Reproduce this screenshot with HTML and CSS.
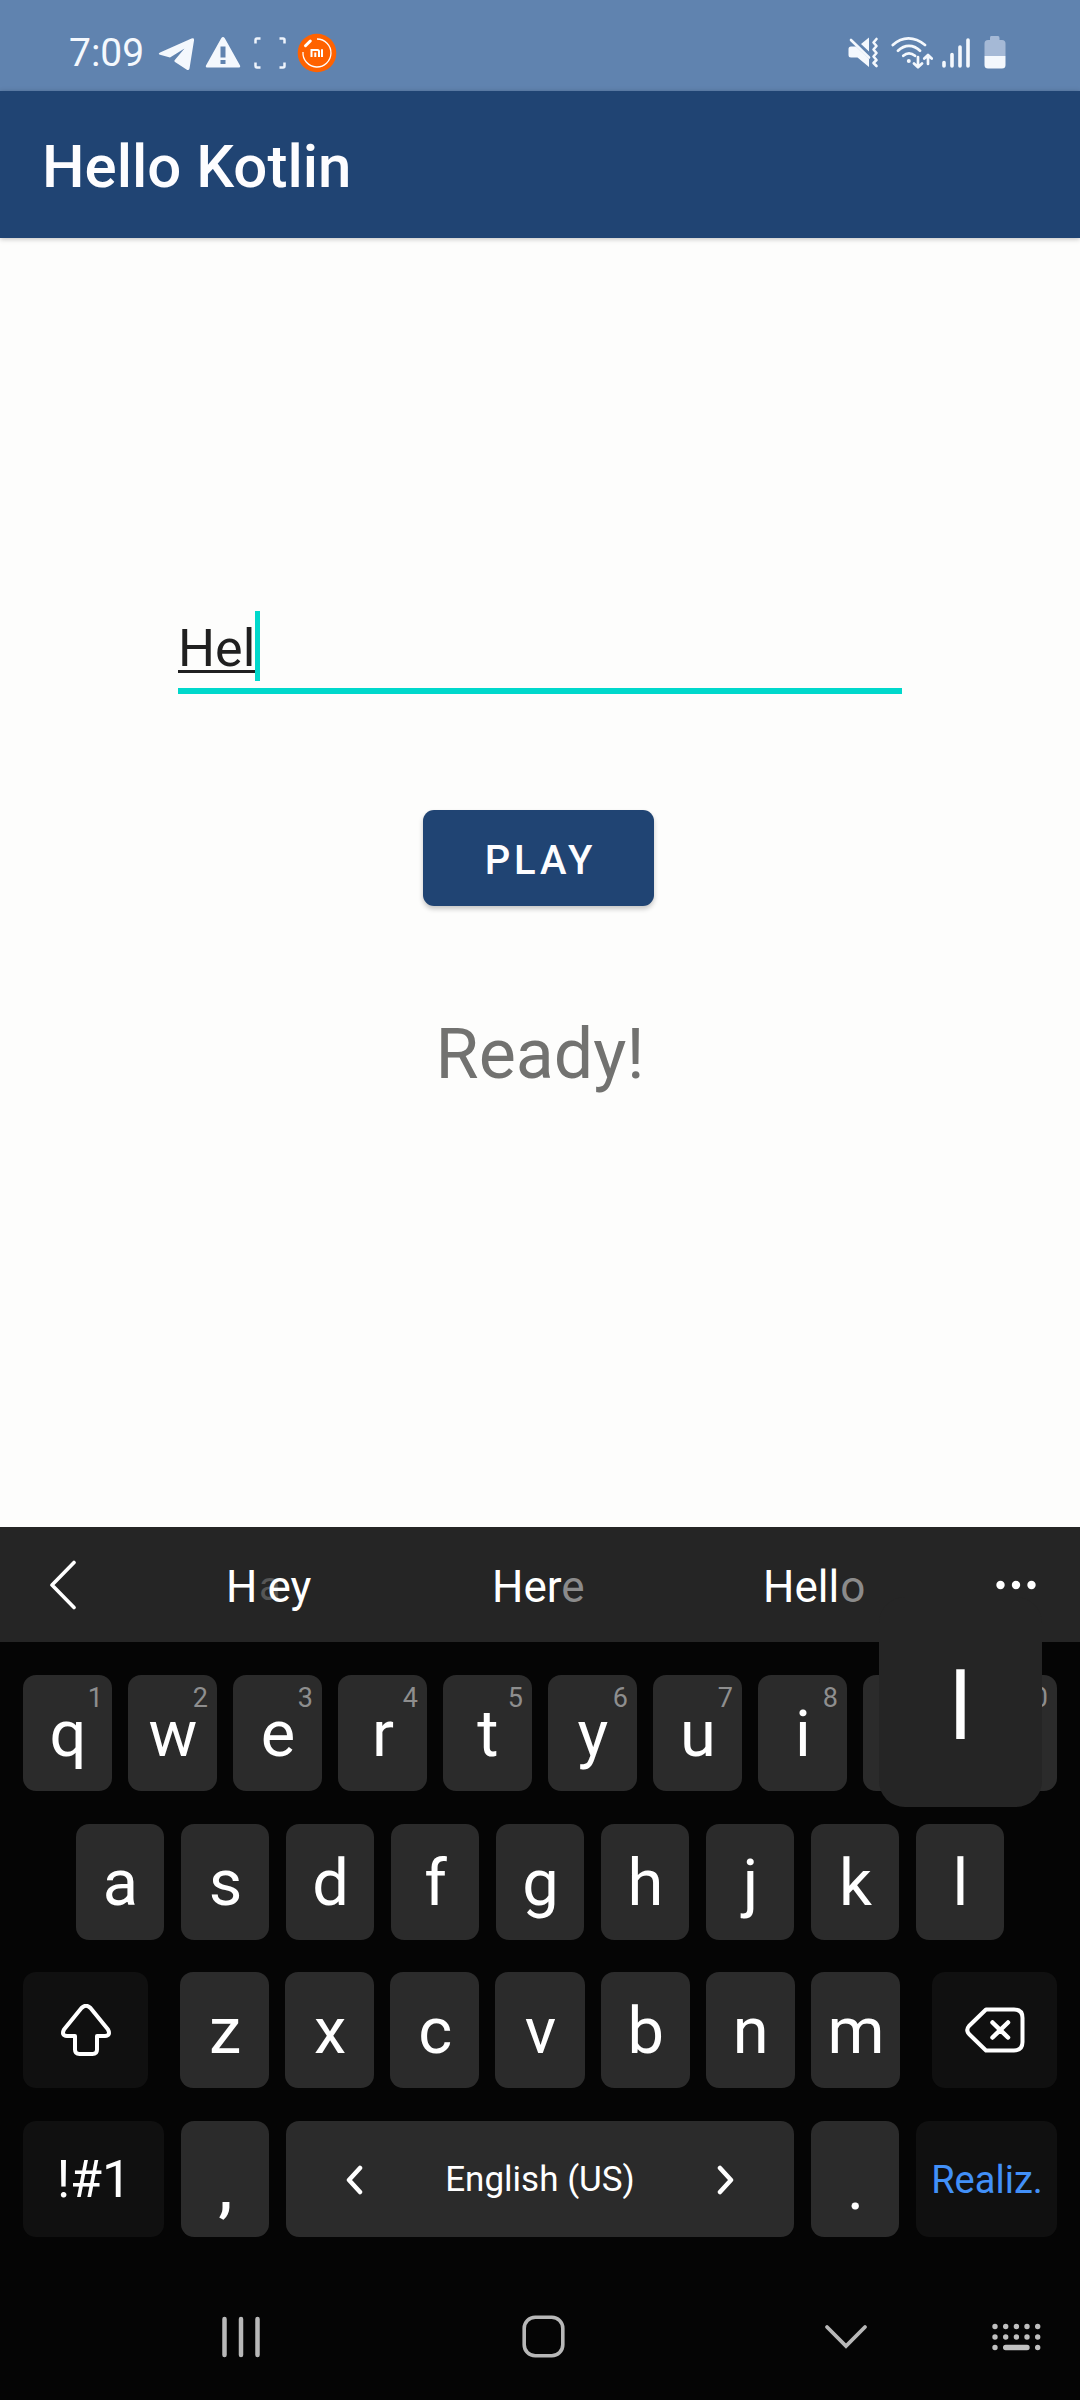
FILE: index.html
```html
<!DOCTYPE html>
<html lang="en">
<head>
<meta charset="utf-8">
<title>Hello Kotlin</title>
<link rel="stylesheet" href="styles.css">
</head>
<body>
<div class="phone">
  <div class="status">
    <span class="time">7:09</span>
    <svg class="i-telegram" width="37" height="33" viewBox="0 0 37 33"><path d="M2 14.500 33.500.500Q36.500-.5 36 2.500L31.500 30.500Q30.800 33 28.500 31.500L17 24Q15.800 23 17 21.800L26.500 10.500 12 19.500 2 16.800Q-.5 15.800 2 14.500Z" fill="#f4f8fd"/></svg>
    <svg class="i-warning" width="36" height="31" viewBox="0 0 36 31"><path fill-rule="evenodd" d="M16.200 1.300Q18-1.200 19.800 1.300L35 28.500Q35.700 30.500 34 30.500H2Q.3 30.500 1 28.500ZM15.500 9.500V20.500H20.500V9.500ZM15.500 23V27H20.500V23Z" fill="#f4f8fd"/></svg>
    <svg class="i-capture" width="32" height="32" viewBox="0 0 32 32"><path d="M1.500 6.500V3Q1.500 1.500 3 1.500H6.500M25.500 1.500H29Q30.500 1.500 30.500 3V6.500M30.500 25.500V29Q30.500 30.500 29 30.500H25.500M6.500 30.500H3Q1.500 30.500 1.500 29V25.500" fill="none" stroke="#eef4fc" stroke-width="2.500"/></svg>
    <svg class="i-mi" width="40" height="40" viewBox="0 0 40 40"><circle cx="20" cy="20" r="19.300" fill="#ff6200"/><path d="M20 6A14 14 0 1 1 6 19" fill="none" stroke="#fff" stroke-width="1.300"/><path d="M8.500 12.700 13.300 8" stroke="#fff" stroke-width="3" stroke-linecap="round"/><path d="M14.500 24V17H20.500Q22 17 22 18.500V24M18.300 19.500V24M25 16.200V24" fill="none" stroke="#fff" stroke-width="2"/></svg>
    <span class="spacer"></span>
    <svg class="i-mute" width="31" height="31" viewBox="0 0 31 31"><path d="M.500 12Q.5 9.500 3 9.500H8L21 22V30L9.500 20.500H3Q.5 20.500.5 18ZM13 7 21 .500V14.500Z" fill="#f4f8fd"/><path d="M3 3 21 20.500" stroke="#f4f8fd" stroke-width="2.600" stroke-linecap="round"/><path d="M28.500 2 25.500 5.500 28.500 9 25.500 12.500 28.500 16 25.500 19.500 28.500 23 25.500 26 28.500 29" fill="none" stroke="#f4f8fd" stroke-width="2.600" stroke-linecap="round" stroke-linejoin="round"/></svg>
    <svg class="i-wifi" width="42" height="33" viewBox="0 0 42 33" fill="none" stroke="#f4f8fd" stroke-width="2.700" stroke-linecap="round" stroke-linejoin="round"><path d="M1.800 9Q9 2.300 17.500 2.300T34 9M7 14.800Q12 9.800 18 9.800T29 14.800M12.300 19.800Q15 17.300 18 17.300T24 19.800M27 21V31M23 27.500 27 31.300 31 27.500M37 28V19.500M33.300 22.500 37 19 40.700 22.500"/><circle cx="17.800" cy="25" r="2" fill="#f4f8fd" stroke="none"/></svg>
    <svg class="i-signal" width="28" height="30" viewBox="0 0 28 30"><path d="M2 24.500V28M10 16.500V28M18 9V28M26 2V28" stroke="#f4f8fd" stroke-width="3.600" stroke-linecap="round"/></svg>
    <svg class="i-battery" width="22" height="33" viewBox="0 0 22 33"><path d="M7 0H14Q15.500 0 15.500 2V4H18Q21.500 4 21.500 7.500V20H.5V7.500Q.5 4 4 4H6V2Q6 0 7 0Z" fill="#a5b9d6"/><path d="M.5 20H21.500V29Q21.500 32.500 18 32.500H4Q.5 32.500.5 29Z" fill="#f4f8fd"/></svg>
  </div>

  <header class="appbar"><h1>Hello Kotlin</h1></header>

  <main class="content">
    <div class="field"><span class="typed">Hel</span><span class="caret"></span></div>
    <button class="play">PLAY</button>
    <p class="ready">Ready!</p>
  </main>

  <section class="keyboard">
    <div class="suggest">
      <svg class="back" width="28" height="50" viewBox="0 0 28 50"><path d="M25 2.500 3 25 25 47.500" fill="none" stroke="#fff" stroke-width="3.600" stroke-linecap="round" stroke-linejoin="round"/></svg>
      <div class="words">
        <span class="word first">H<i class="ghost">a</i><span class="shifted">ey</span></span>
        <span class="word second">Her<span class="dim">e</span></span>
        <span class="word third">Hell<span class="dim">o</span></span>
      </div>
      <svg class="more" width="40" height="10" viewBox="0 0 40 10" fill="#fff"><circle cx="4.500" cy="5" r="4.200"/><circle cx="20" cy="5" r="4.200"/><circle cx="35.500" cy="5" r="4.200"/></svg>
    </div>
    <div class="keys">
      <div class="row">
        <div class="key">q<sup>1</sup></div><div class="key">w<sup>2</sup></div><div class="key">e<sup>3</sup></div><div class="key">r<sup>4</sup></div><div class="key">t<sup>5</sup></div><div class="key">y<sup>6</sup></div><div class="key">u<sup>7</sup></div><div class="key">i<sup>8</sup></div><div class="key"></div><div class="key"><sup>0</sup></div>
      </div>
      <div class="row home-row">
        <div class="key">a</div><div class="key">s</div><div class="key">d</div><div class="key">f</div><div class="key">g</div><div class="key">h</div><div class="key">j</div><div class="key">k</div><div class="key">l</div>
      </div>
      <div class="row third-row">
        <div class="key side"><svg width="50" height="52" viewBox="0 0 50 52"><path d="M20.500 4Q25-.5 29.500 4L47 25.500Q50 31.500 44 32H36V45.500Q36 50 31.500 50H18.500Q14 50 14 45.500V32H6Q0 31.500 3 25.500Z" fill="none" stroke="#fff" stroke-width="4" stroke-linejoin="round"/></svg></div>
        <div class="letters"><div class="key">z</div><div class="key">x</div><div class="key">c</div><div class="key">v</div><div class="key">b</div><div class="key">n</div><div class="key">m</div></div>
        <div class="key side"><svg width="60" height="46" viewBox="0 0 60 46" fill="none" stroke="#fff" stroke-width="4" stroke-linecap="round" stroke-linejoin="round"><path d="M21 2.500H49Q57.500 2.500 57.500 11V35Q57.500 43.500 49 43.500H21L4 27Q.5 23 4 19Z"/><path d="M27.500 15.500 43 30.500M43 15.500 27.500 30.500" stroke-width="4.500"/></svg></div>
      </div>
      <div class="row">
        <div class="key wide sym">!#1</div>
        <div class="key punct comma">,</div>
        <div class="key space">
          <svg width="17" height="30" viewBox="0 0 17 30"><path d="M14 3 3 15 14 27" fill="none" stroke="#fff" stroke-width="4.500" stroke-linecap="round" stroke-linejoin="round"/></svg>
          <span>English (US)</span>
          <svg width="17" height="30" viewBox="0 0 17 30"><path d="M3 3 14 15 3 27" fill="none" stroke="#fff" stroke-width="4.500" stroke-linecap="round" stroke-linejoin="round"/></svg>
        </div>
        <div class="key punct">.</div>
        <div class="key wide done">Realiz.</div>
      </div>
    </div>
    <div class="popup">l</div>
  </section>

  <nav class="navbar">
    <svg class="recents" width="39" height="42" viewBox="0 0 39 42"><path d="M2.500 3V39M19 3V39M35.500 3V39" stroke="#b8b8b8" stroke-width="4.500" stroke-linecap="round"/></svg>
    <svg class="home" width="43" height="43" viewBox="0 0 43 43"><rect x="2.200" y="2.200" width="38.600" height="38.600" rx="11" fill="none" stroke="#b8b8b8" stroke-width="3.600"/></svg>
    <svg class="hide" width="44" height="26" viewBox="0 0 44 26"><path d="M3 3 22 22 41 3" fill="none" stroke="#b8b8b8" stroke-width="3.800" stroke-linecap="round"/></svg>
    <svg class="board" width="49" height="28" viewBox="0 0 49 28" fill="none" stroke="#c0c0c0" stroke-width="5.400" stroke-linecap="round"><path d="M3 3.500h0M13.700 3.500h0M24.400 3.500h0M35 3.500h0M45.700 3.500h0M3 14h0M13.700 14h0M24.400 14h0M35 14h0M45.700 14h0M3 24.500h0M13.700 24.500H35M45.700 24.500h0"/></svg>
  </nav>
</div>
</body>
</html>
```
FILE: styles.css
```css
* { box-sizing: border-box; }

body {
  margin: 0;
  font-family: Roboto, "Liberation Sans", sans-serif;
}

svg { display: block; flex: none; }

.phone {
  width: 1080px;
  height: 2400px;
  display: flex;
  flex-direction: column;
  overflow: hidden;
  background: #fdfdfc;
}

/* Status bar */
.status {
  height: 91px;
  flex: none;
  display: flex;
  align-items: center;
  padding: 14px 74px 0 69px;
  background: #6083af;
}
.time {
  width: 89px;
  padding-top: 1px;
  font-size: 39px;
  line-height: 48px;
  color: #f4f8fd;
}
.i-telegram { margin-top: 4px; }
.i-warning { margin-left: 10px; }
.i-capture { margin-left: 13px; }
.i-mi { margin-left: 11px; }
.spacer { flex: 1; }
.i-wifi { margin-left: 12px; }
.i-signal { margin-left: 9px; }
.i-battery { margin-left: 14px; }

/* App bar */
.appbar {
  height: 147px;
  flex: none;
  display: flex;
  align-items: center;
  padding: 4px 0 0 42px;
  background: #204473;
  box-shadow: 0 1px 5px rgba(0, 0, 0, .25);
}
.appbar h1 {
  margin: 0;
  font-size: 60px;
  font-weight: 500;
  line-height: 72px;
  color: #fdfdff;
}

/* Screen content */
.content {
  flex: 1;
  display: flex;
  flex-direction: column;
  align-items: center;
  padding-top: 368px;
}
.field {
  width: 724px;
  height: 88px;
  display: flex;
  align-items: flex-start;
  border-bottom: 6px solid #00d8cb;
}
.typed {
  margin-top: 12px;
  font-size: 52px;
  line-height: 62px;
  color: #202020;
  text-decoration: underline;
  text-decoration-thickness: 3px;
  text-underline-offset: 4px;
  text-decoration-skip-ink: none;
}
.caret {
  width: 5px;
  height: 70px;
  margin-top: 5px;
  background: #00d8cb;
}
.play {
  width: 231px;
  height: 96px;
  margin: 116px 3px 0 0;
  padding: 5px 0 0 4px;
  border: 0;
  border-radius: 11px;
  background: #204473;
  box-shadow: 0 3px 5px rgba(0, 0, 0, .22);
  color: #fdfdff;
  font: 500 40px/48px Roboto, sans-serif;
  letter-spacing: 3.800px;
}
.ready {
  margin: 107px 0 0;
  font-size: 70px;
  line-height: 83px;
  color: #727270;
}

/* Keyboard */
.keyboard {
  position: relative;
  height: 746px;
  flex: none;
  background: #050505;
  color: #fff;
}
.suggest {
  height: 115px;
  display: flex;
  align-items: center;
  padding: 0 44px 0 49px;
  background: #252525;
}
.words {
  flex: 1;
  display: grid;
  grid-template-columns: 266px 271px 1fr;
  padding-left: 149px;
}
.word {
  position: relative;
  padding-top: 4px;
  font-size: 44px;
  line-height: 52px;
}
.shifted {
  position: relative;
  margin-left: 10px;
}
.ghost {
  position: absolute;
  left: 33px;
  font-style: normal;
  font-size: 40px;
  color: #565656;
}
.dim { color: #8b8b8b; }
.third .dim { margin-left: 1px; }
.keys {
  display: flex;
  flex-direction: column;
  gap: 32.500px;
  padding: 33px 23px 0;
}
.row {
  height: 116px;
  display: flex;
  gap: 17px;
}
.row:first-child { gap: 16px; }
.key {
  position: relative;
  flex: 1;
  display: flex;
  align-items: center;
  justify-content: center;
  padding: 2px 0 0 1px;
  border-radius: 13px;
  background: #2b2b2b;
  font-size: 65px;
  line-height: 76px;
}
.key sup {
  position: absolute;
  top: 7px;
  right: 9px;
  font-size: 27px;
  line-height: 32px;
  color: #8e8e8e;
}
.home-row { padding: 0 53px; }
.third-row { justify-content: space-between; }
.letters {
  width: 720px;
  display: flex;
  gap: 16px;
}
.side {
  flex: none;
  width: 125px;
  padding: 0;
  background: #101010;
}
.wide {
  flex: none;
  width: 141px;
  background: #101010;
}
.punct {
  flex: none;
  width: 88px;
  padding-top: 17px;
}
.comma { font-weight: 500; }
.space {
  justify-content: space-between;
  padding: 2px 60px 0;
  font-size: 35px;
}
.sym { font-size: 52px; }
.done {
  font-size: 38px;
  color: #4290f8;
}
.popup {
  position: absolute;
  left: 879px;
  top: 70px;
  width: 163px;
  height: 210px;
  border-radius: 26px;
  background: #252525;
  font-size: 92px;
  line-height: 222px;
  text-align: center;
}

/* Navigation bar */
.navbar {
  height: 127px;
  flex: none;
  display: flex;
  align-items: center;
  padding-left: 222px;
  background: #050505;
}
.home { margin-left: 261px; }
.hide { margin-left: 259px; }
.board { margin-left: 124px; }
```
